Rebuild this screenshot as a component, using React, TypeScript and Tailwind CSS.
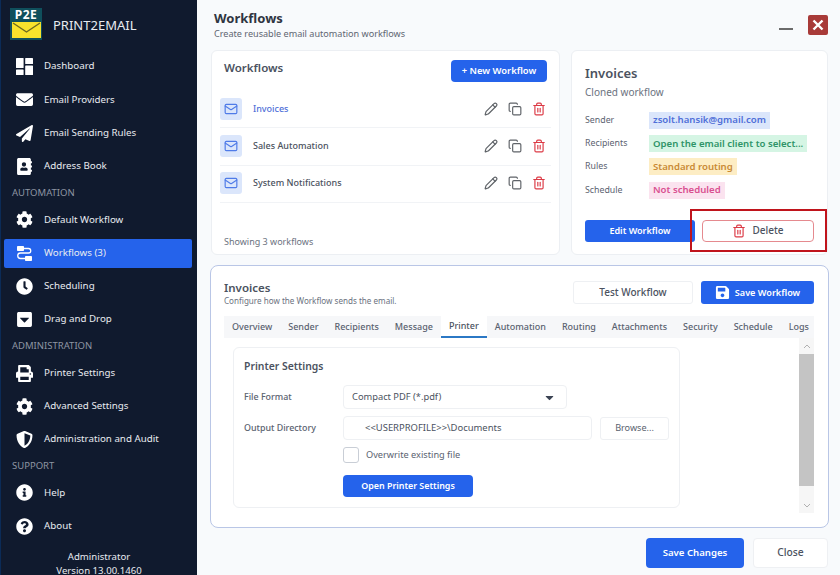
import { Copy, Mail, Pencil, Trash2 } from "lucide-react";
import type { ReactNode } from "react";
import {
  FaAddressBook,
  FaCaretDown,
  FaCaretSquareDown,
  FaClock,
  FaCog,
  FaEnvelope,
  FaInfoCircle,
  FaPaperPlane,
  FaPrint,
  FaQuestionCircle,
  FaSave,
  FaShieldAlt,
} from "react-icons/fa";

const DashboardIcon = () => (
  <svg width="17" height="17" viewBox="0 0 17 17" fill="white">
    <rect x="0" y="0" width="7.6" height="10" rx="0.6" />
    <rect x="9.2" y="0" width="7.8" height="6" rx="0.6" />
    <rect x="0" y="11.4" width="7.6" height="5.6" rx="0.6" />
    <rect x="9.2" y="7.4" width="7.8" height="9.6" rx="0.6" />
  </svg>
);

const WorkflowIcon = () => (
  <svg width="17" height="17" viewBox="0 0 17 17" fill="none">
    <rect x="1" y="1" width="7" height="5" rx="0.8" fill="white" />
    <rect x="9" y="11" width="7" height="5" rx="0.8" fill="white" />
    <path d="M8 3.5h4.5a2 2 0 0 1 0 4.5h-8a2 2 0 0 0 0 5.5H9" stroke="white" strokeWidth="1.3" />
  </svg>
);

const Logo = () => (
  <div className="flex h-8 w-8 flex-col items-center bg-[#0f4f5c]">
    <span className="h-[14px] text-[12px] leading-[14px] font-bold tracking-[0.5px] text-white">P2E</span>
    <svg width="29" height="16" viewBox="0 0 29 16">
      <rect width="29" height="16" fill="#f7e32c" />
      <path d="M1 1l13.5 9L28 1" fill="none" stroke="#6b6a20" strokeWidth="1.4" />
    </svg>
  </div>
);

const NavItem = ({ icon, label, active }: { icon: ReactNode; label: string; active?: boolean }) => (
  <div className="flex h-[33.3px] items-center">
    <div className={`ml-[3px] flex h-[29px] w-[188px] items-center rounded-[2px] pl-[12px] ${active ? "bg-[#2563eb]" : ""}`}>
      <div className="flex w-[17px] justify-center text-[17px] text-white">{icon}</div>
      <span className="ml-[11px] text-[9.75px] text-[#e8ebf0]">{label}</span>
    </div>
  </div>
);

const SectionLabel = ({ children }: { children: string }) => (
  <div className="flex h-[20px] items-center pl-[11px] text-[9.5px] text-[#8e95a3]">{children}</div>
);

const workflows = ["Invoices", "Sales Automation", "System Notifications"];

const WorkflowRow = ({ name, selected }: { name: string; selected?: boolean }) => (
  <div className="flex h-[37.3px] items-center border-b border-[#f1f3f6] pb-px">
    <div className="flex h-[22px] w-[22px] items-center justify-center rounded-[3px] bg-[#dbe6fb]">
      <Mail size={14} className="text-[#4f7be8]" />
    </div>
    <span className={`ml-[11px] flex-1 text-[9px] font-medium ${selected ? "text-[#4f6fd8]" : "text-[#4b5260]"}`}>{name}</span>
    <div className="flex items-center gap-[10px] pr-[5px]">
      <Pencil size={14} className="text-[#5f6368]" />
      <Copy size={14} className="text-[#5f6368]" />
      <Trash2 size={14} className="text-[#dc3a45]" />
    </div>
  </div>
);

const DetailRow = ({ label, value, chip }: { label: string; value: string; chip: string }) => (
  <div className="flex h-[23.2px] items-center">
    <span className="w-[64px] text-[8.8px] text-[#5b6270]">{label}</span>
    <span className={`flex h-[17px] items-center px-1 text-[9.6px] font-semibold ${chip}`}>{value}</span>
  </div>
);

const tabs = ["Overview", "Sender", "Recipients", "Message", "Printer", "Automation", "Routing", "Attachments", "Security", "Schedule", "Logs"];

export default function App() {
  return (
    <div className="flex h-[575px] w-[840px] overflow-hidden bg-[#f8fafc] font-['Noto_Sans',sans-serif]">
      <aside className="h-[575px] w-[197px] shrink-0 border-l border-[#0b2b57] bg-[#101a2e]">
        <div className="flex h-[50px] items-start pt-[8px] pl-[9px]">
          <Logo />
          <span className="mt-[8px] ml-[11px] text-[13px] text-[#e8ebf0]">PRINT2EMAIL</span>
        </div>
        <NavItem icon={<DashboardIcon />} label="Dashboard" />
        <NavItem icon={<FaEnvelope />} label="Email Providers" />
        <NavItem icon={<FaPaperPlane />} label="Email Sending Rules" />
        <NavItem icon={<FaAddressBook />} label="Address Book" />
        <SectionLabel>AUTOMATION</SectionLabel>
        <NavItem icon={<FaCog />} label="Default Workflow" />
        <NavItem icon={<WorkflowIcon />} label="Workflows (3)" active />
        <NavItem icon={<FaClock />} label="Scheduling" />
        <NavItem icon={<FaCaretSquareDown />} label="Drag and Drop" />
        <SectionLabel>ADMINISTRATION</SectionLabel>
        <NavItem icon={<FaPrint />} label="Printer Settings" />
        <NavItem icon={<FaCog />} label="Advanced Settings" />
        <NavItem icon={<FaShieldAlt />} label="Administration and Audit" />
        <SectionLabel>SUPPORT</SectionLabel>
        <NavItem icon={<FaInfoCircle />} label="Help" />
        <NavItem icon={<FaQuestionCircle />} label="About" />
        <div className="pt-[7px] text-center text-[9.6px] leading-[14px] text-[#e8ebf0]">
          <div>Administrator</div>
          <div>Version 13.00.1460</div>
        </div>
      </aside>

      <main className="relative flex min-w-0 flex-1 flex-col pr-[12px] pl-[14px]">
        <header className="flex h-[50px] justify-between pt-[10px]">
          <div className="ml-[3px]">
            <h1 className="text-[13px] leading-[17px] font-bold text-[#2f3541]">Workflows</h1>
            <p className="text-[9.1px] leading-[13px] text-[#5f6672]">Create reusable email automation workflows</p>
          </div>
          <div className="flex items-start gap-[15px] pt-[5px]">
            <div className="mt-[13px] h-[2px] w-[14px] bg-[#6b6b6b]" />
            <div className="flex h-[20px] w-[20px] items-center justify-center rounded-[2px] bg-[#a83a38] text-[16px] font-bold text-white">
              <svg width="12" height="12" viewBox="0 0 12 12">
                <path d="M1.5 1.5l9 9M10.5 1.5l-9 9" stroke="white" strokeWidth="2.4" />
              </svg>
            </div>
          </div>
        </header>

        <div className="flex h-[205px] gap-[11px]">
          <section className="flex w-[349px] flex-col rounded-[6px] border border-[#eceff3] bg-white px-[8px]">
            <div className="flex h-[40px] items-start justify-between pr-[4px] pl-[4px]">
              <h2 className="pt-[8px] text-[11.5px] font-semibold text-[#4b5260]">Workflows</h2>
              <button className="mt-[9px] flex h-[22px] w-[96px] items-center justify-center rounded-[4px] bg-[#2563eb] text-[9.4px] font-semibold text-white">
                + New Workflow
              </button>
            </div>
            {workflows.map((name, i) => (
              <WorkflowRow key={name} name={name} selected={i === 0} />
            ))}
            <p className="mt-auto pb-[6px] pl-[4px] text-[9px] text-[#6b7280]">Showing 3 workflows</p>
          </section>

          <section className="flex flex-1 flex-col rounded-[6px] border border-[#eceff3] bg-white pt-[13px] pr-[13px] pl-[13px]">
            <h2 className="text-[13px] leading-[18px] font-semibold text-[#4b5260]">Invoices</h2>
            <p className="mt-[3px] text-[10px] leading-[14px] text-[#6b7280]">Cloned workflow</p>
            <div className="mt-[10px]">
              <DetailRow label="Sender" value="zsolt.hansik@gmail.com" chip="bg-[#dbe6fb] text-[#4f6fd8]" />
              <DetailRow label="Recipients" value="Open the email client to select..." chip="bg-[#d5f5e4] text-[#2f9468]" />
              <DetailRow label="Rules" value="Standard routing" chip="bg-[#fdedc4] text-[#c98a35]" />
              <DetailRow label="Schedule" value="Not scheduled" chip="bg-[#fbe3ef] text-[#d9508f]" />
            </div>
            <div className="mt-[18px] flex gap-[7px]">
              <button className="h-[22px] w-[110px] rounded-[3px] bg-[#2563eb] text-[9px] font-semibold text-white">Edit Workflow</button>
              <button className="flex h-[22px] w-[112px] items-center justify-center gap-[6px] rounded-[4px] border border-[#e58a8f] bg-white text-[10px] font-medium text-[#4b5260]">
                <Trash2 size={14} className="text-[#dc3a45]" />
                Delete
              </button>
            </div>
          </section>
        </div>

        <section className="mt-[10px] -mr-px -ml-px flex h-[263px] flex-col rounded-[8px] border border-[#b9c6e6] bg-white pr-[14px] pl-[13px]">
          <div className="flex h-[50px] items-start justify-between">
            <div className="pt-[14px]">
              <h2 className="text-[11.5px] leading-[15px] font-semibold text-[#4b5260]">Invoices</h2>
              <p className="text-[8.1px] leading-[12px] text-[#6b7280]">Configure how the Workflow sends the email.</p>
            </div>
            <div className="flex gap-[8px] pt-[15px]">
              <button className="h-[23px] w-[120px] rounded-[3px] border border-[#eef0f3] bg-white text-[10px] font-medium text-[#4b5260]">Test Workflow</button>
              <button className="flex h-[23px] w-[113px] items-center justify-center gap-[5px] rounded-[3px] bg-[#2563eb] text-[9.1px] font-semibold text-white">
                <FaSave size={15} />
                Save Workflow
              </button>
            </div>
          </div>

          <div className="flex h-[22px] bg-[#f6f7f9]">
            {tabs.map((tab) => (
              <div
                key={tab}
                className={`flex items-center px-2 text-[9px] font-medium ${tab === "Printer" ? "border-b-2 border-[#2b78c5] bg-white text-[#4b5260]" : "text-[#5a6270]"}`}
              >
                {tab}
              </div>
            ))}
          </div>

          <div className="flex h-[175px]">
            <div className="min-w-0 flex-1 pt-[9px] pl-[9px]">
              <div className="h-[161px] w-[447px] rounded-[6px] border border-[#eef0f3] px-[10px]">
                <h3 className="pt-[10px] text-[10.4px] leading-[16px] font-semibold text-[#4b5260]">Printer Settings</h3>
                <div className="mt-[11px] flex items-center">
                  <span className="w-[99px] text-[8.9px] font-medium text-[#5a6270]">File Format</span>
                  <div className="flex h-[24px] w-[224px] items-center justify-between rounded-[4px] border border-[#eef0f3] pr-[10px] pl-[8px] text-[9.3px] text-[#4b5260]">
                    Compact PDF (*.pdf)
                    <FaCaretDown size={13} className="text-[#3c4454]" />
                  </div>
                </div>
                <div className="mt-[7px] flex items-center">
                  <span className="w-[99px] text-[8.9px] font-medium text-[#5a6270]">Output Directory</span>
                  <div className="flex h-[24px] w-[249px] items-center rounded-[4px] border border-[#eef0f3] pl-[21px] text-[9.45px] text-[#4b5260]">
                    {"<<USERPROFILE>>\\Documents"}
                  </div>
                  <button className="ml-[8px] h-[23px] w-[69px] rounded-[3px] border border-[#eef0f3] text-[9.1px] text-[#5a6270]">Browse...</button>
                </div>
                <div className="mt-[7px] ml-[99px] flex items-center">
                  <div className="h-[16px] w-[16px] rounded-[3px] border border-[#c9ced6]" />
                  <span className="ml-[7px] text-[9.2px] text-[#5a6270]">Overwrite existing file</span>
                </div>
                <button className="mt-[12px] ml-[99px] h-[22px] w-[130px] rounded-[4px] bg-[#2563eb] text-[8.9px] font-semibold text-white">
                  Open Printer Settings
                </button>
              </div>
            </div>
            <div className="flex w-[15px] flex-col bg-[#f6f6f6] text-[#b0b0b0]">
              <div className="flex h-[16px] items-center justify-center">
                <svg width="8" height="5" viewBox="0 0 8 5">
                  <path d="M1 4l3-3 3 3" fill="none" stroke="currentColor" />
                </svg>
              </div>
              <div className="h-[132px] bg-[#c4c4c4]" />
              <div className="flex flex-1 items-end justify-center pb-[5px]">
                <svg width="8" height="5" viewBox="0 0 8 5">
                  <path d="M1 1l3 3 3-3" fill="none" stroke="currentColor" />
                </svg>
              </div>
            </div>
          </div>
        </section>

        <footer className="mt-[10px] flex justify-end gap-[9px]">
          <button className="h-[30px] w-[98px] rounded-[4px] bg-[#2563eb] text-[9.6px] font-semibold text-white">Save Changes</button>
          <button className="h-[30px] w-[75px] rounded-[4px] border border-[#eef0f3] bg-white text-[10.3px] font-medium text-[#4b5260]">Close</button>
        </footer>

        <div className="pointer-events-none absolute top-[209px] left-[493px] h-[43px] w-[137px] border-[2px] border-[#c0141c]" />
      </main>
    </div>
  );
}
